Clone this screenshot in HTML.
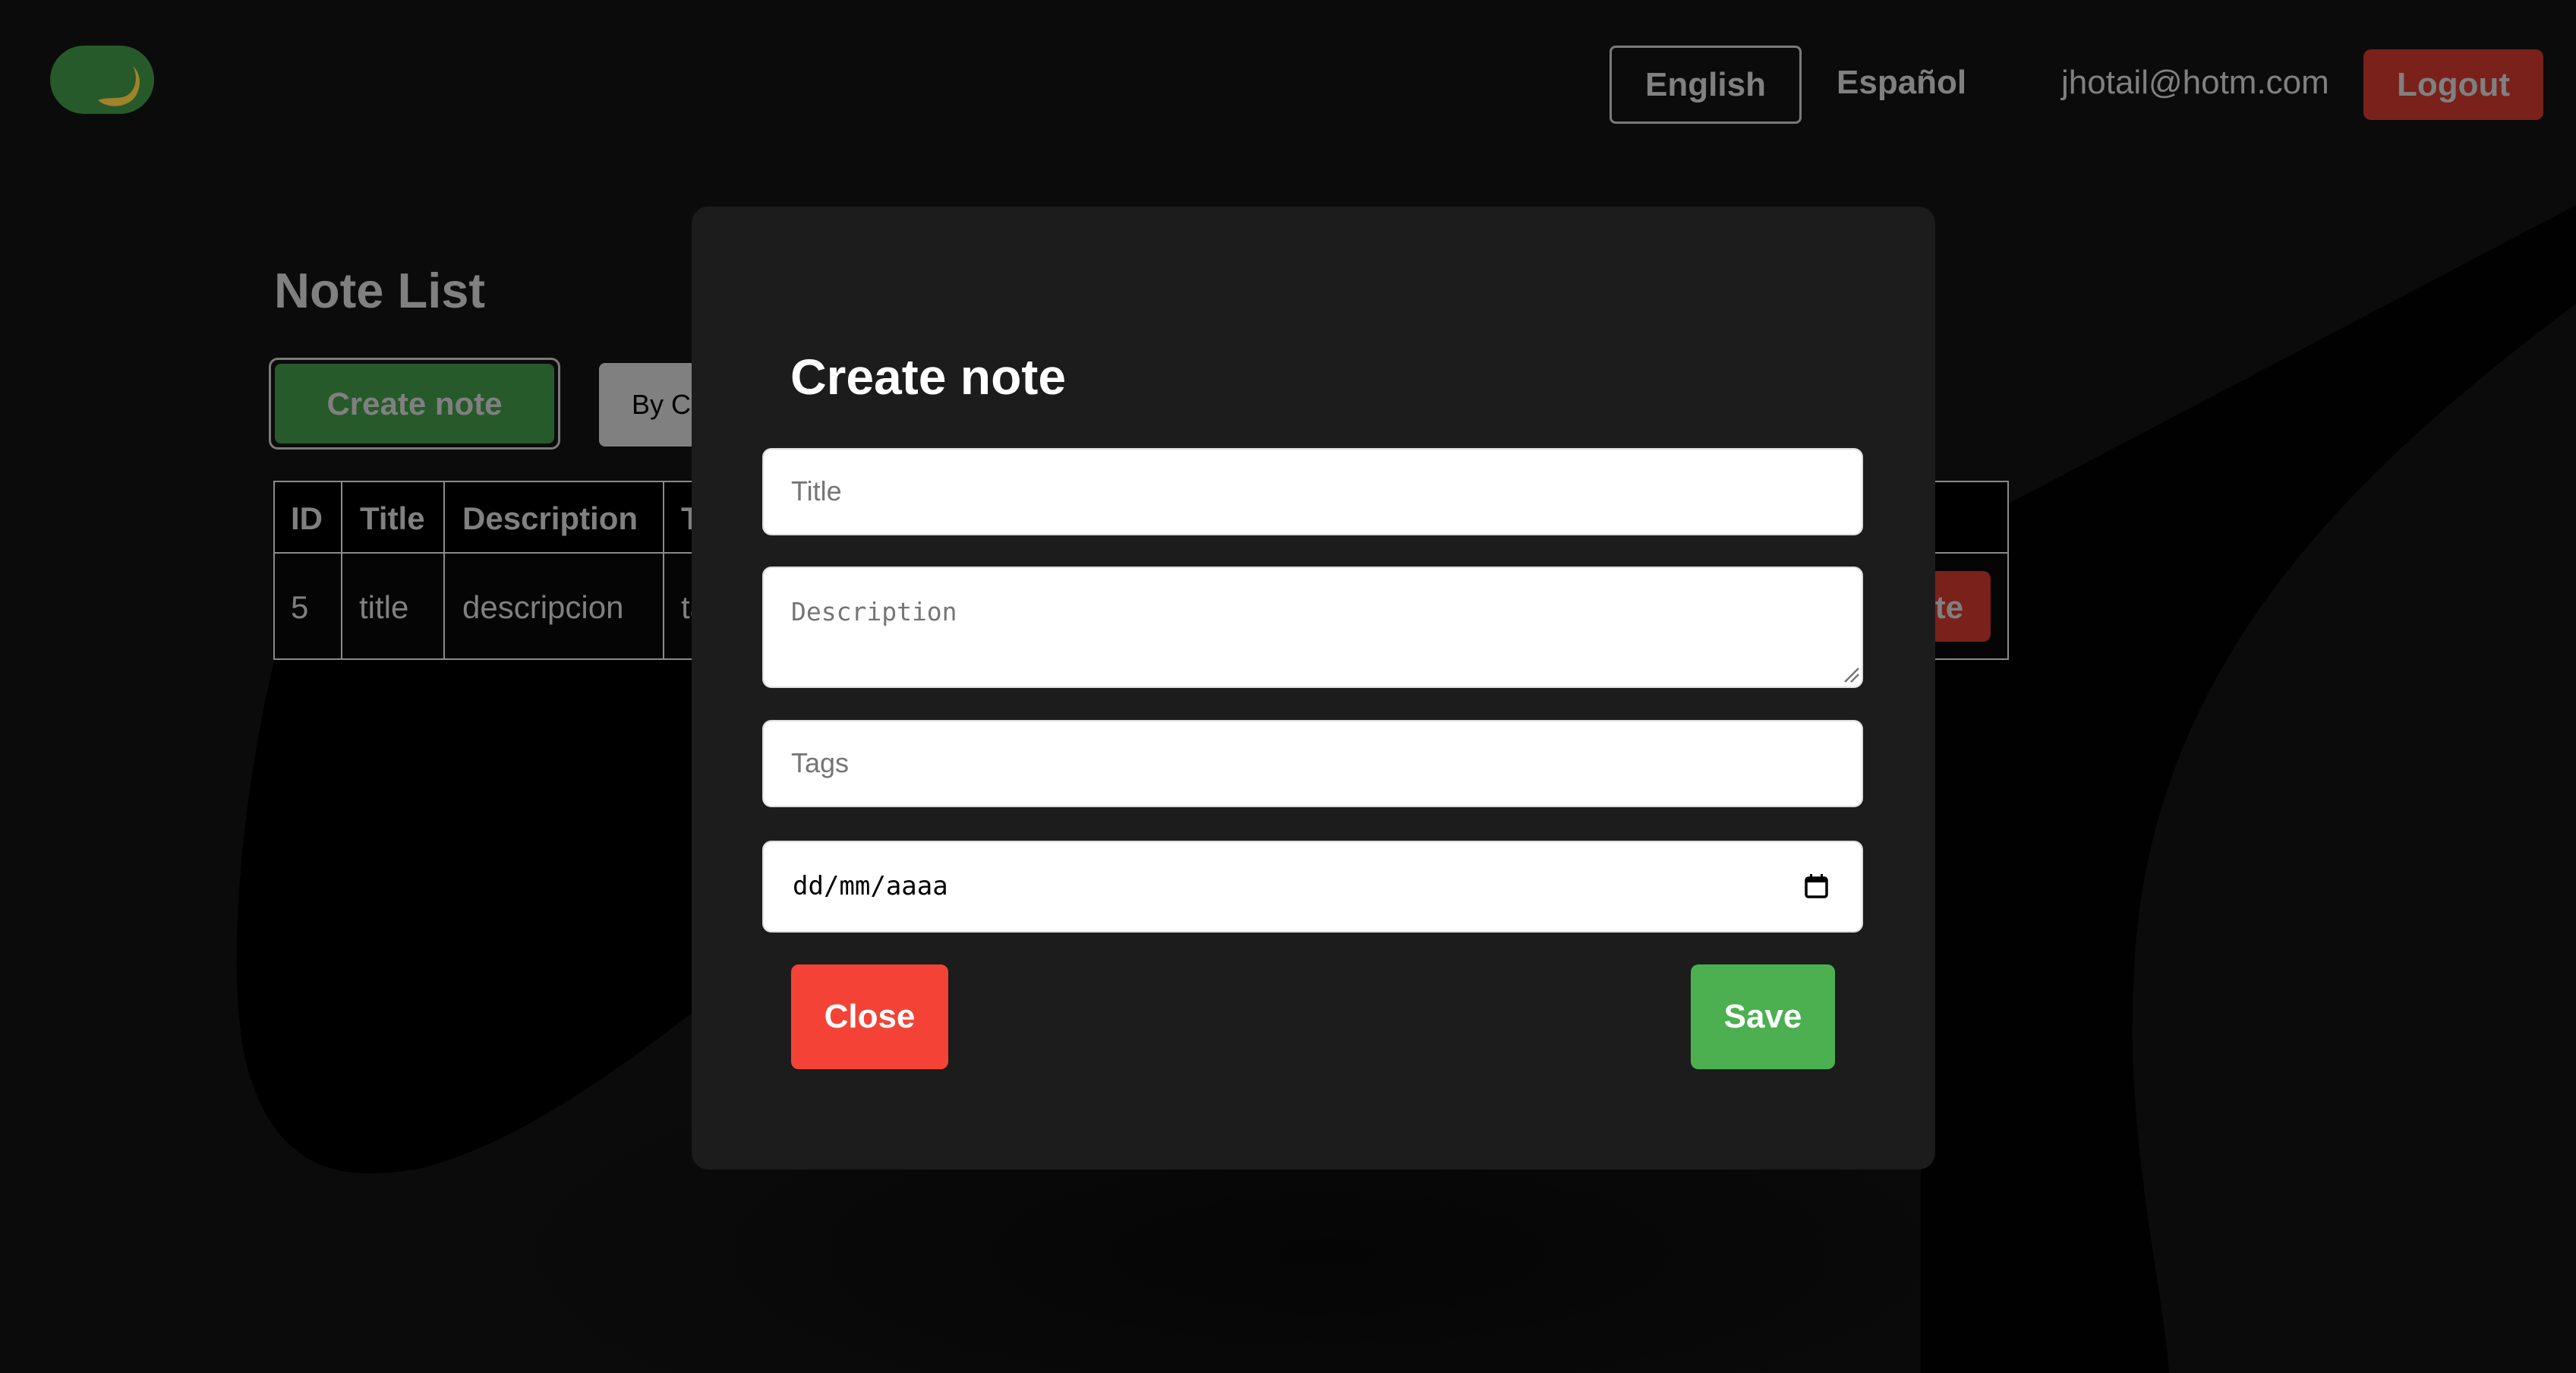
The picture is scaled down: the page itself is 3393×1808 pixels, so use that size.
<!DOCTYPE html>
<html><head><meta charset="utf-8"><style>
*{margin:0;padding:0;box-sizing:border-box}
html,body{width:3393px;height:1808px;overflow:hidden}
body{background:#0b0b0b;font-family:"Liberation Sans",sans-serif;position:relative}
.a{position:absolute}
svg{display:block}
.t{display:flex;align-items:center;justify-content:center}
</style></head><body>
<svg class="a" style="left:0;top:0" width="3393" height="1808">
<defs><radialGradient id="g" cx="0.5" cy="0.5" r="0.5"><stop offset="0" stop-color="#050505"/><stop offset="1" stop-color="#0b0b0b"/></radialGradient></defs>
<ellipse cx="1750" cy="1650" rx="1100" ry="300" fill="url(#g)"/>
<path d="M380,800 C320,1000 290,1300 330,1420 C370,1540 450,1560 560,1537 C700,1500 850,1380 930,1320 L930,800 Z" fill="#000"/>
<path d="M2530,724 L3393,270 L3393,400 C3100,620 2820,880 2810,1300 C2800,1500 2850,1700 2857,1808 L2530,1808 Z" fill="#010101"/>
</svg>

<div class="a" style="left:66px;top:60px;width:137px;height:90px;border-radius:45px;background:#275a2b"></div>
<svg class="a" style="left:125px;top:80px" width="70" height="70" viewBox="0 0 70 70"><path d="M50,7 C58,22 54,44 36,48 C26,50 14,48 4,52 C18,64 44,62 54,46 C62,32 60,16 50,7Z" fill="#a0832a"/></svg>

<div class="a t" style="left:2120px;top:60px;width:253px;height:103px;border:3px solid #7a7a7a;border-radius:8px;color:#808080;font-weight:bold;font-size:44px">English</div>
<div class="a" style="left:2419px;top:84px;color:#808080;font-weight:bold;font-size:44px">Español</div>
<div class="a" style="left:2715px;top:84px;color:#808080;font-size:44px">jhotail@hotm.com</div>
<div class="a t" style="left:3113px;top:65px;width:237px;height:93px;background:#7a211b;border-radius:10px;color:#808080;font-weight:bold;font-size:44px">Logout</div>

<div class="a" style="left:361px;top:345px;color:#808080;font-weight:bold;font-size:65px">Note List</div>
<div class="a" style="left:354px;top:471px;width:384px;height:121px;border:3px solid #7a7a7a;border-radius:12px;padding:5px"><div class="t" style="width:100%;height:100%;background:#275a2b;border-radius:8px;color:#808080;font-weight:bold;font-size:42px">Create note</div></div>
<div class="a" style="left:789px;top:478px;width:300px;height:110px;background:#808080;border-radius:8px;color:#000;font-size:36px;padding:34px 0 0 43px">By Category</div>

<div class="a" style="left:360px;top:633px;width:2286px;height:236px;border:2px solid #8a8a8a;background:#050505"></div>
<div class="a" style="left:362px;top:635px;width:2282px;height:94px;background:#000;border-bottom:2px solid #8a8a8a"></div>
<div class="a" style="left:449px;top:633px;width:2px;height:236px;background:#8a8a8a"></div>
<div class="a" style="left:584px;top:633px;width:2px;height:236px;background:#8a8a8a"></div>
<div class="a" style="left:873px;top:633px;width:2px;height:236px;background:#8a8a8a"></div>
<div class="a" style="left:383px;top:659px;color:#808080;font-weight:bold;font-size:42px">ID</div>
<div class="a" style="left:474px;top:659px;color:#808080;font-weight:bold;font-size:42px">Title</div>
<div class="a" style="left:609px;top:659px;color:#808080;font-weight:bold;font-size:42px">Description</div>
<div class="a" style="left:897px;top:659px;color:#808080;font-weight:bold;font-size:42px">Tags</div>
<div class="a" style="left:383px;top:776px;color:#808080;font-size:42px">5</div>
<div class="a" style="left:473px;top:776px;color:#808080;font-size:42px">title</div>
<div class="a" style="left:609px;top:776px;color:#808080;font-size:42px">descripcion</div>
<div class="a" style="left:897px;top:776px;color:#808080;font-size:42px">tags</div>
<div class="a" style="left:2420px;top:752px;width:202px;height:93px;background:#7a211b;border-radius:10px;color:#808080;font-weight:bold;font-size:42px;padding:24px 0 0 40px">Delete</div>

<div class="a" style="left:911px;top:272px;width:1638px;height:1268px;background:#1c1c1c;border-radius:22px"></div>
<div class="a" style="left:1041px;top:458px;color:#fff;font-weight:bold;font-size:66px">Create note</div>
<div class="a" style="left:1004px;top:590px;width:1450px;height:115px;background:#fff;border:2px solid #ddd;border-radius:12px;color:#757575;font-size:36px;padding:34px 0 0 36px">Title</div>
<div class="a" style="left:1004px;top:746px;width:1450px;height:160px;background:#fff;border:2px solid #ddd;border-radius:12px;color:#757575;font-family:'DejaVu Sans Mono',monospace;font-size:33px;padding:38px 0 0 36px">Description</div>
<svg class="a" style="left:2428px;top:878px" width="22" height="22"><path d="M2,20 L20,2 M10,20 L20,10" stroke="#777" stroke-width="2.5"/></svg>
<div class="a" style="left:1004px;top:948px;width:1450px;height:115px;background:#fff;border:2px solid #ddd;border-radius:12px;color:#757575;font-size:36px;padding:34px 0 0 36px">Tags</div>
<div class="a" style="left:1004px;top:1107px;width:1450px;height:121px;background:#fff;border:2px solid #ddd;border-radius:12px;color:#000;font-family:'DejaVu Sans Mono',monospace;font-size:34px;padding:38px 0 0 38px">dd/mm/aaaa</div>
<svg class="a" style="left:2376px;top:1148px" width="34" height="36" viewBox="0 0 34 36"><rect x="3" y="8" width="27" height="25" rx="3" fill="none" stroke="#000" stroke-width="3.5"/><rect x="3" y="8" width="27" height="6" fill="#000"/><rect x="8" y="3" width="3" height="6" fill="#000"/><rect x="22" y="3" width="3" height="6" fill="#000"/></svg>
<div class="a t" style="left:1042px;top:1270px;width:207px;height:138px;background:#f44336;border-radius:10px;color:#fff;font-weight:bold;font-size:44px">Close</div>
<div class="a t" style="left:2227px;top:1270px;width:190px;height:138px;background:#4caf50;border-radius:10px;color:#fff;font-weight:bold;font-size:44px">Save</div>
</body></html>
